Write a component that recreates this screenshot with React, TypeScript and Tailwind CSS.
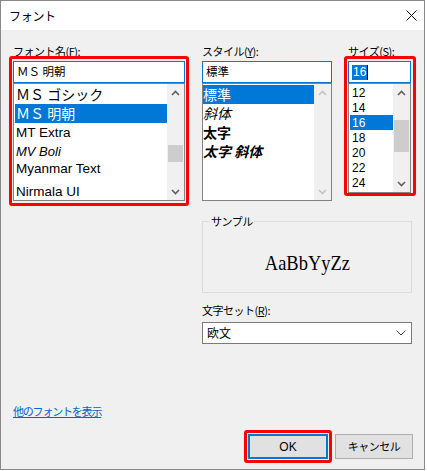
import React from "react";

const ui = { fontFamily: '"Noto Sans CJK JP", "Noto Sans", sans-serif' };
const latin = { fontFamily: '"Liberation Sans", "Noto Sans CJK JP", sans-serif' };

function ArrowUp({ color = "#606060" }: { color?: string }) {
  return (
    <svg width="9" height="6" viewBox="0 0 9 6">
      <polyline points="1,5 4.5,1.5 8,5" fill="none" stroke={color} strokeWidth="1.6" />
    </svg>
  );
}

function ArrowDown({ color = "#606060" }: { color?: string }) {
  return (
    <svg width="9" height="6" viewBox="0 0 9 6">
      <polyline points="1,1 4.5,4.5 8,1" fill="none" stroke={color} strokeWidth="1.6" />
    </svg>
  );
}

function Scrollbar({
  width,
  thumbTop,
  thumbHeight,
  disabled,
}: {
  width: number;
  thumbTop?: number;
  thumbHeight?: number;
  disabled?: boolean;
}) {
  const c = disabled ? "#c2c2c2" : "#606060";
  return (
    <div className="relative flex h-full flex-col bg-[#f0f0f0]" style={{ width }}>
      <div className="flex h-[17px] items-center justify-center">
        <ArrowUp color={c} />
      </div>
      <div className="relative flex-1">
        {thumbHeight ? (
          <div
            className="absolute left-[1px] right-[1px] bg-[#cdcdcd]"
            style={{ top: thumbTop, height: thumbHeight }}
          />
        ) : null}
      </div>
      <div className="flex h-[17px] items-center justify-center">
        <ArrowDown color={c} />
      </div>
    </div>
  );
}

function RedBox({ className }: { className: string }) {
  return (
    <div
      className={`pointer-events-none absolute rounded-[3px] border-[3px] border-[#ff0000] ${className}`}
    />
  );
}

const fontRows = [
  { label: "ＭＳ ゴシック", h: "h-[20px]", style: ui, cls: "text-[14px]" },
  { label: "ＭＳ 明朝", h: "h-[19px]", style: ui, cls: "text-[14px]", selected: true },
  { label: "MT Extra", h: "h-[20px]", style: latin, cls: "text-[13.5px]" },
  { label: "MV Boli", h: "h-[17px]", style: latin, cls: "text-[13px] italic" },
  { label: "Myanmar Text", h: "h-[21px]", style: latin, cls: "text-[13.5px] -mt-[3px]" },
  { label: "Nirmala UI", h: "h-[20px]", style: latin, cls: "text-[13.5px] mt-[2px]" },
];

const styleRows = [
  { label: "標準", cls: "", selected: true },
  { label: "斜体", cls: "italic" },
  { label: "太字", cls: "font-bold" },
  { label: "太字 斜体", cls: "font-bold italic" },
];

const sizes = ["12", "14", "16", "18", "20", "22", "24"];

export default function App() {
  return (
    <div className="h-[471px] w-[427px] bg-white text-black" style={ui}>
      <div className="flex h-[470px] w-[425px] flex-col border border-[#888888] bg-[#f0f0f0]">
        {/* Title bar */}
        <div className="flex h-[29px] items-center justify-between bg-white pl-[8px] pr-[7px]">
          <span className="text-[12px] tracking-[-0.3px]">フォント</span>
          <svg width="11" height="11" viewBox="0 0 11 11">
            <path d="M0.5 0.5 L10.5 10.5 M10.5 0.5 L0.5 10.5" stroke="#111" strokeWidth="1" />
          </svg>
        </div>

        <div className="flex flex-1 flex-col pl-[12px]">
          <div className="flex pt-[13px]">
            {/* Font name */}
            <div className="w-[172px]">
              <div className="mb-[2px] h-[16px] text-[11px] leading-[16px] tracking-[-0.5px]">
                フォント名(<span className="underline">F</span>):
              </div>
              <div className="relative">
                <RedBox className="-left-[4px] -right-[4px] -top-[5px] -bottom-[5px]" />
                <div className="flex h-[22px] items-center border border-[#0078d7] bg-white pl-[3px] text-[11.5px]">
                  ＭＳ 明朝
                </div>
                <div className="flex h-[118px] border border-[#828282] bg-white">
                  <div className="flex-1 overflow-hidden pl-[1px]">
                    {fontRows.map((r) => (
                      <div
                        key={r.label}
                        className={`flex items-center overflow-visible whitespace-nowrap px-[1px] ${r.h} ${
                          r.selected ? "bg-[#0078d7] text-white" : ""
                        }`}
                      >
                        <span className={r.cls} style={r.style}>
                          {r.label}
                        </span>
                      </div>
                    ))}
                  </div>
                  <Scrollbar width={17} thumbTop={44} thumbHeight={17} />
                </div>
              </div>
            </div>

            <div className="ml-[17px] w-[210px]">
              <div className="flex">
                {/* Style */}
                <div className="w-[130px]">
                  <div className="mb-[2px] h-[16px] text-[11px] leading-[16px] tracking-[-0.5px]">
                    スタイル(<span className="underline">Y</span>):
                  </div>
                  <div className="flex h-[22px] items-center border border-[#0078d7] bg-white pl-[3px] text-[11.5px]">
                    標準
                  </div>
                  <div className="flex h-[118px] border border-[#828282] bg-white">
                    <div className="flex-1 pt-[1px]">
                      {styleRows.map((r) => (
                        <div
                          key={r.label}
                          className={`flex h-[19px] items-center whitespace-nowrap text-[14px] ${r.cls} ${
                            r.selected ? "bg-[#0078d7] text-white" : ""
                          }`}
                        >
                          {r.label}
                        </div>
                      ))}
                    </div>
                    <Scrollbar width={17} disabled />
                  </div>
                </div>

                {/* Size */}
                <div className="ml-[16px] w-[63px]">
                  <div className="mb-[2px] h-[16px] text-[11px] leading-[16px] tracking-[-0.5px]">
                    サイズ(S):
                  </div>
                  <div className="relative">
                    <RedBox className="-left-[4px] -right-[5px] -top-[5px] -bottom-[3px]" />
                    <div className="flex h-[22px] items-center border border-[#0078d7] bg-white pl-[3px]">
                      <span className="bg-[#0078d7] px-[1px] text-[12px] leading-[15px] text-white" style={latin}>
                        16
                      </span>
                      <span className="h-[15px] w-[1px] bg-black" />
                    </div>
                    <div className="flex h-[110px] border border-[#828282] bg-white">
                      <div className="flex-1 pl-[1px] pt-[1px]">
                        {sizes.map((s) => (
                          <div
                            key={s}
                            className={`flex h-[15px] items-center pl-[2px] text-[12px] ${
                              s === "16" ? "bg-[#0078d7] text-white" : ""
                            }`}
                            style={latin}
                          >
                            {s}
                          </div>
                        ))}
                      </div>
                      <Scrollbar width={17} thumbTop={19} thumbHeight={32} />
                    </div>
                  </div>
                </div>
              </div>

              {/* Sample */}
              <div className="relative mt-[20px] flex h-[72px] items-center justify-center border border-[#dcdcdc] pt-[12px]">
                <span className="absolute -top-[9px] left-[7px] bg-[#f0f0f0] px-[1px] text-[11px] leading-[16px] tracking-[-0.5px]">
                  サンプル
                </span>
                <span
                  className="inline-block scale-x-[0.88] text-[21px] leading-none"
                  style={{ fontFamily: '"Liberation Serif", serif' }}
                >
                  AaBbYyZz
                </span>
              </div>

              {/* Charset */}
              <div className="mt-[9px] h-[16px] text-[11px] leading-[16px] tracking-[-0.5px]">
                文字セット(<span className="underline">R</span>):
              </div>
              <div className="mt-[4px] flex h-[22px] items-center justify-between border border-[#7a7a7a] bg-white pl-[4px] pr-[5px] text-[12px]">
                <span>欧文</span>
                <svg width="10" height="6" viewBox="0 0 10 6">
                  <polyline points="0.5,0.5 5,5 9.5,0.5" fill="none" stroke="#444" strokeWidth="1" />
                </svg>
              </div>
            </div>
          </div>

          <div className="mt-auto">
            <span className="text-[11px] leading-[16px] tracking-[-1.2px] text-[#0066cc] underline">
              他のフォントを表示
            </span>
          </div>

          <div className="mb-[10px] mt-[13px] flex justify-end gap-[7px] pr-[11px]">
            <div className="relative">
              <RedBox className="-inset-[4px]" />
              <div
                className="flex h-[25px] w-[80px] items-center justify-center border-2 border-[#0078d7] bg-[#e1e1e1] text-[12px]"
                style={latin}
              >
                OK
              </div>
            </div>
            <div className="flex h-[25px] w-[78px] items-center justify-center border border-[#adadad] bg-[#e1e1e1] text-[11px] tracking-[-0.5px]">
              キャンセル
            </div>
          </div>
        </div>
      </div>
    </div>
  );
}
